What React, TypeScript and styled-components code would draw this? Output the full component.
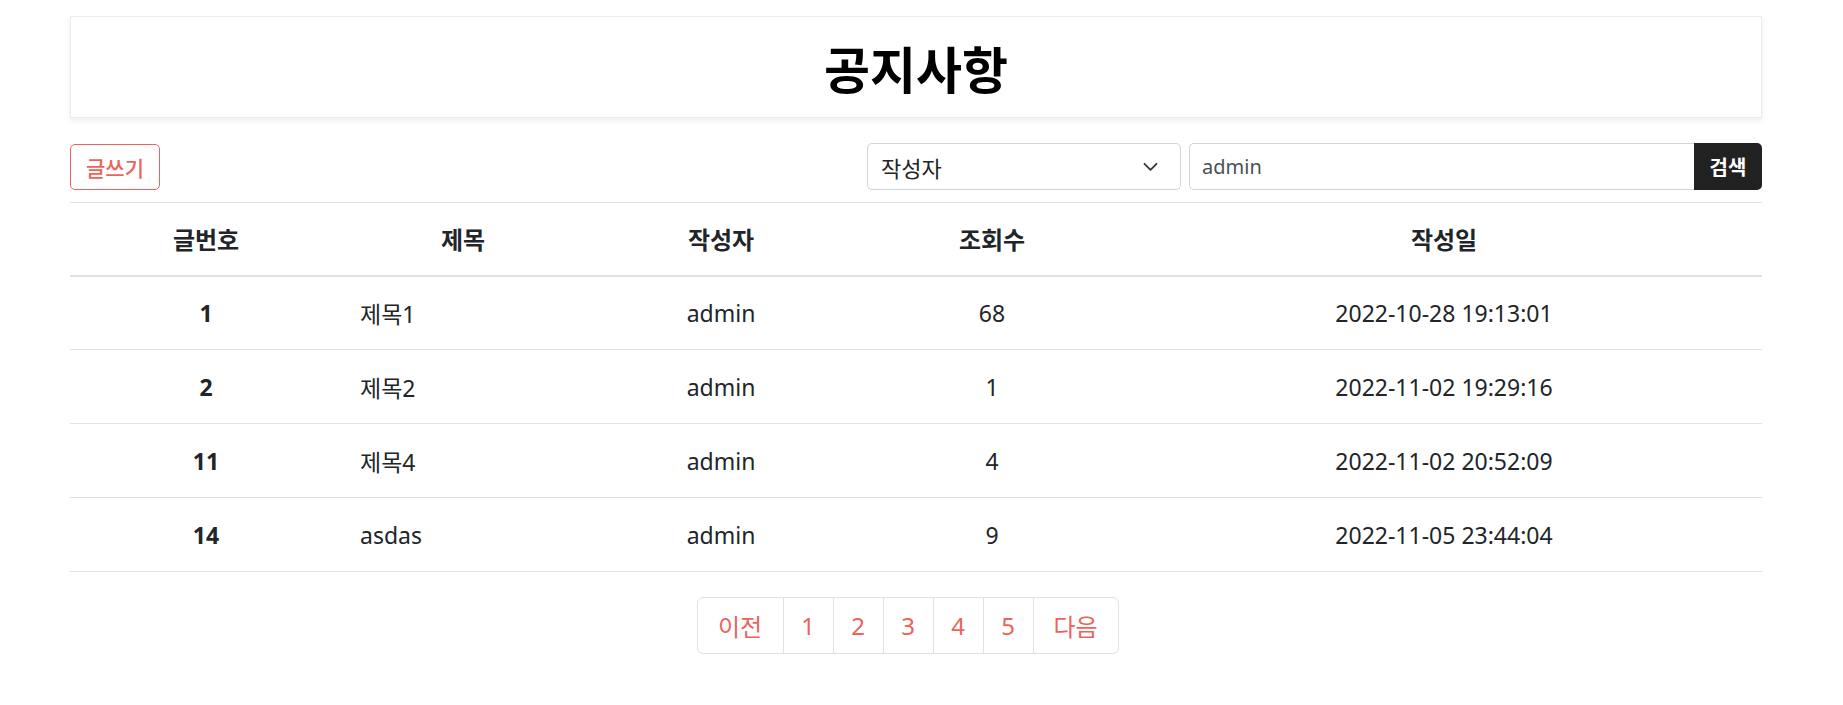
import React from "react";
import styled, { createGlobalStyle } from "styled-components";

const GlobalStyle = createGlobalStyle`
  html, body {
    margin: 0;
    padding: 0;
    background: #ffffff;
  }
  body {
    font-family: "Noto Sans", "Noto Sans CJK KR", sans-serif;
    color: #212529;
  }
  * { box-sizing: border-box; }
`;

const ACCENT = "#eb645b";

const Page = styled.div`
  padding: 16px 0 40px 70px;
`;

const Container = styled.div`
  width: 1692px;
`;

const TitleCard = styled.header`
  height: 102px;
  border: 1px solid #ececec;
  box-shadow: 0 3px 6px rgba(0, 0, 0, 0.07);
  display: flex;
  align-items: center;
  justify-content: center;
`;

const Title = styled.h1`
  margin: 0;
  font-family: "Noto Sans CJK KR", sans-serif;
  font-size: 50px;
  font-weight: 700;
  color: #000;
  line-height: 1;
`;

const Toolbar = styled.div`
  margin-top: 25px;
  padding-bottom: 12px;
  display: flex;
  align-items: center;
  justify-content: space-between;
`;

const WriteButton = styled.button`
  width: 90px;
  height: 46px;
  border: 1px solid ${ACCENT};
  border-radius: 5px;
  background: #fff;
  color: ${ACCENT};
  font-family: "Noto Sans CJK KR", sans-serif;
  font-size: 21px;
  font-weight: 500;
  cursor: pointer;
  padding: 0;
`;

const SearchArea = styled.div`
  display: flex;
  align-items: center;
  gap: 8px;
`;

const SelectBox = styled.div`
  width: 314px;
  height: 47px;
  border: 1px solid #ced4da;
  border-radius: 5px;
  display: flex;
  align-items: center;
  justify-content: space-between;
  padding: 0 22px 0 13px;
  font-family: "Noto Sans CJK KR", sans-serif;
  font-size: 22px;
  color: #212529;
`;

const InputGroup = styled.div`
  display: flex;
  height: 47px;
`;

const SearchInput = styled.div`
  width: 505px;
  height: 47px;
  border: 1px solid #ced4da;
  border-right: none;
  border-radius: 5px 0 0 5px;
  display: flex;
  align-items: center;
  padding: 0 12px;
  font-size: 20px;
  color: #495057;
`;

const SearchButton = styled.button`
  width: 68px;
  height: 47px;
  border: none;
  border-radius: 0 5px 5px 0;
  background: #212121;
  color: #fff;
  font-family: "Noto Sans CJK KR", sans-serif;
  font-size: 20px;
  font-weight: 700;
  padding: 0;
  cursor: pointer;
`;

const Table = styled.table`
  width: 100%;
  border-collapse: collapse;
  table-layout: fixed;
  border-top: 1px solid #dee2e6;
`;

const Col = styled.col<{ $w: number }>`
  width: ${(p) => p.$w}px;
`;

const Th = styled.th`
  height: 73px;
  padding: 0;
  font-size: 24px;
  font-weight: 700;
  text-align: center;
  vertical-align: middle;
  color: #212529;
  border-bottom: 2px solid #dee2e6;
`;

const Td = styled.td<{ $left?: boolean; $bold?: boolean }>`
  height: 74px;
  padding: 0 0 0 ${(p) => (p.$left ? "18px" : "0")};
  font-size: 23px;
  font-weight: ${(p) => (p.$bold ? 700 : 400)};
  text-align: ${(p) => (p.$left ? "left" : "center")};
  vertical-align: middle;
  color: #212529;
  border-bottom: 1px solid #dee2e6;
`;

const PagerRow = styled.nav`
  margin-top: 25px;
  display: flex;
  justify-content: center;
  padding-right: 17px;
`;

const Pager = styled.ul`
  list-style: none;
  margin: 0;
  padding: 0;
  display: flex;
  border: 1px solid #dee2e6;
  border-radius: 6px;
  overflow: hidden;
`;

const PageItem = styled.li<{ $wide?: boolean }>`
  height: 55px;
  min-width: ${(p) => (p.$wide ? "85px" : "50px")};
  display: flex;
  align-items: center;
  justify-content: center;
  font-family: "Noto Sans", "Noto Sans CJK KR", sans-serif;
  font-size: 24px;
  color: ${ACCENT};
  border-left: 1px solid #dee2e6;
  cursor: pointer;
  &:first-child {
    border-left: none;
  }
`;

const rows = [
  { no: 1, title: "제목1", writer: "admin", views: 68, date: "2022-10-28 19:13:01" },
  { no: 2, title: "제목2", writer: "admin", views: 1, date: "2022-11-02 19:29:16" },
  { no: 11, title: "제목4", writer: "admin", views: 4, date: "2022-11-02 20:52:09" },
  { no: 14, title: "asdas", writer: "admin", views: 9, date: "2022-11-05 23:44:04" },
];

const Chevron = () => (
  <svg width="15" height="10" viewBox="0 0 15 10" fill="none">
    <path d="M1.5 1.8L7.5 7.8L13.5 1.8" stroke="#343a40" strokeWidth="1.9" strokeLinecap="round" strokeLinejoin="round" />
  </svg>
);

export default function App() {
  return (
    <>
      <GlobalStyle />
      <Page>
        <Container>
          <TitleCard>
            <Title>공지사항</Title>
          </TitleCard>
          <Toolbar>
            <WriteButton>글쓰기</WriteButton>
            <SearchArea>
              <SelectBox>
                <span>작성자</span>
                <Chevron />
              </SelectBox>
              <InputGroup>
                <SearchInput>admin</SearchInput>
                <SearchButton>검색</SearchButton>
              </InputGroup>
            </SearchArea>
          </Toolbar>
          <Table>
            <colgroup>
              <Col $w={272} />
              <Col $w={242} />
              <Col $w={274} />
              <Col $w={268} />
              <Col $w={636} />
            </colgroup>
            <thead>
              <tr>
                <Th>글번호</Th>
                <Th>제목</Th>
                <Th>작성자</Th>
                <Th>조회수</Th>
                <Th>작성일</Th>
              </tr>
            </thead>
            <tbody>
              {rows.map((r) => (
                <tr key={r.no}>
                  <Td $bold>{r.no}</Td>
                  <Td $left>{r.title}</Td>
                  <Td>{r.writer}</Td>
                  <Td>{r.views}</Td>
                  <Td>{r.date}</Td>
                </tr>
              ))}
            </tbody>
          </Table>
          <PagerRow>
            <Pager>
              <PageItem $wide>이전</PageItem>
              <PageItem>1</PageItem>
              <PageItem>2</PageItem>
              <PageItem>3</PageItem>
              <PageItem>4</PageItem>
              <PageItem>5</PageItem>
              <PageItem $wide>다음</PageItem>
            </Pager>
          </PagerRow>
        </Container>
      </Page>
    </>
  );
}
